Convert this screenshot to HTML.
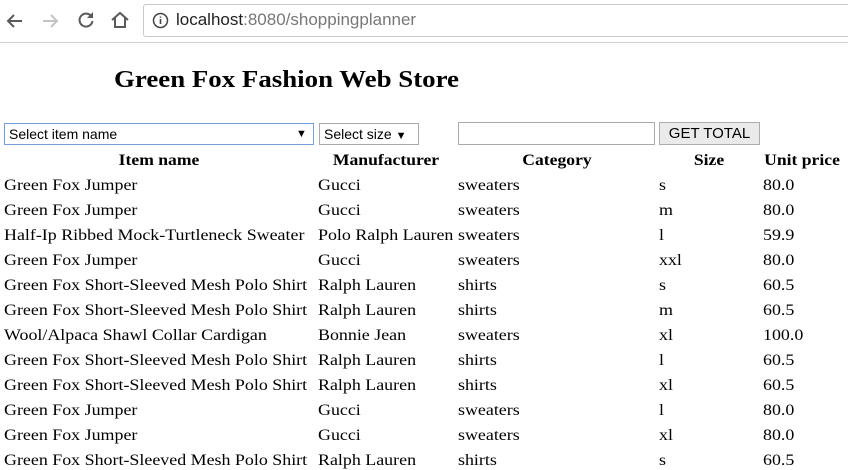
<!DOCTYPE html>
<html><head><style>
body{margin:0;width:848px;height:456px;overflow:hidden;background:#fff;font-family:"Liberation Serif",serif;position:relative}
.a{position:absolute;white-space:nowrap}
.bar{position:absolute;left:0;top:0;width:848px;height:42px;background:#fff;border-bottom:1px solid #d0d0d0}
.url{position:absolute;left:143px;top:4px;width:720px;height:31px;border:1px solid #c8c8c8;border-radius:3px;font-family:"Liberation Sans",sans-serif;font-size:17px}
.sel{position:absolute;border:1px solid #a9a9a9;font-family:"Liberation Sans",sans-serif;font-size:14px;line-height:20px;padding-left:4px;box-sizing:border-box;height:22px}
.r{position:absolute;font-size:16px;white-space:nowrap;color:#000;transform:scaleX(1.12);transform-origin:0 0}
.h{position:absolute;font-size:16px;font-weight:bold;transform:translateX(-50%) scaleX(1.1);white-space:nowrap}
</style></head><body>
<div class="bar">
<svg class="a" style="left:4px;top:10px" width="22" height="22" viewBox="0 0 22 22"><path d="M18 11H5M10 5l-6 6 6 6" stroke="#5a5a5a" stroke-width="2" fill="none"/></svg>
<svg class="a" style="left:39px;top:10px" width="22" height="22" viewBox="0 0 22 22"><path d="M4 11h13M12 5l6 6-6 6" stroke="#c4c4c4" stroke-width="2" fill="none"/></svg>
<svg class="a" style="left:75px;top:9px" width="22" height="22" viewBox="0 0 22 22"><path d="M16.5 7.5A6.5 6.5 0 1 0 17.5 12" stroke="#5a5a5a" stroke-width="2" fill="none"/><path d="M18 3v6h-6z" fill="#5a5a5a"/></svg>
<svg class="a" style="left:109px;top:9px" width="22" height="22" viewBox="0 0 22 22"><path d="M3 11l8-7 8 7M6 9v9h10V9" stroke="#5a5a5a" stroke-width="2" fill="none"/></svg>
<div class="url"><svg class="a" style="left:8px;top:7px" width="17" height="17" viewBox="0 0 17 17"><circle cx="8.5" cy="8.5" r="7" stroke="#444" stroke-width="1.5" fill="none"/><path d="M8.5 7v5M8.5 4.5v1.2" stroke="#444" stroke-width="1.6"/></svg><span class="a" style="left:32px;top:5px"><span style="color:#222">localhost</span><span style="color:#777">:8080/shoppingplanner</span></span></div>
</div>
<div class="a" style="left:114px;top:67px;font-size:24px;font-weight:bold;transform:scaleX(1.12);transform-origin:0 0">Green Fox Fashion Web Store</div>
<div class="sel" style="left:4px;top:123px;width:310px;border-color:#7a9fd6">Select item name<span class="a" style="left:291px;font-size:11px">▼</span></div>
<div class="sel" style="left:319px;top:123px;width:100px">Select size <span style="font-size:11px">▼</span></div>
<div class="sel" style="left:458px;top:122px;width:197px;height:23px"></div>
<div class="a" style="left:659px;top:122px;width:101px;height:23px;background:#eaeaea;border:1px solid #adadad;box-sizing:border-box;font-family:'Liberation Sans',sans-serif;font-size:15px;text-align:center;line-height:21px">GET TOTAL</div>
<div class="h" style="left:159px;top:152px">Item name</div>
<div class="h" style="left:386px;top:152px">Manufacturer</div>
<div class="h" style="left:557px;top:152px">Category</div>
<div class="h" style="left:709px;top:152px">Size</div>
<div class="h" style="left:802px;top:152px">Unit price</div>
<div id="rows"></div>
<script>
var d=[["Green Fox Jumper","Gucci","sweaters","s","80.0"],["Green Fox Jumper","Gucci","sweaters","m","80.0"],["Half-Ip Ribbed Mock-Turtleneck Sweater","Polo Ralph Lauren","sweaters","l","59.9"],["Green Fox Jumper","Gucci","sweaters","xxl","80.0"],["Green Fox Short-Sleeved Mesh Polo Shirt","Ralph Lauren","shirts","s","60.5"],["Green Fox Short-Sleeved Mesh Polo Shirt","Ralph Lauren","shirts","m","60.5"],["Wool/Alpaca Shawl Collar Cardigan","Bonnie Jean","sweaters","xl","100.0"],["Green Fox Short-Sleeved Mesh Polo Shirt","Ralph Lauren","shirts","l","60.5"],["Green Fox Short-Sleeved Mesh Polo Shirt","Ralph Lauren","shirts","xl","60.5"],["Green Fox Jumper","Gucci","sweaters","l","80.0"],["Green Fox Jumper","Gucci","sweaters","xl","80.0"],["Green Fox Short-Sleeved Mesh Polo Shirt","Ralph Lauren","shirts","s","60.5"]];
var x=[4,318,458,659,763],h="";
d.forEach(function(r,i){r.forEach(function(c,j){h+='<div class="r" style="left:'+x[j]+'px;top:'+(177+25*i)+'px">'+c+'</div>';});});
document.getElementById("rows").innerHTML=h;
</script>
</body></html>
